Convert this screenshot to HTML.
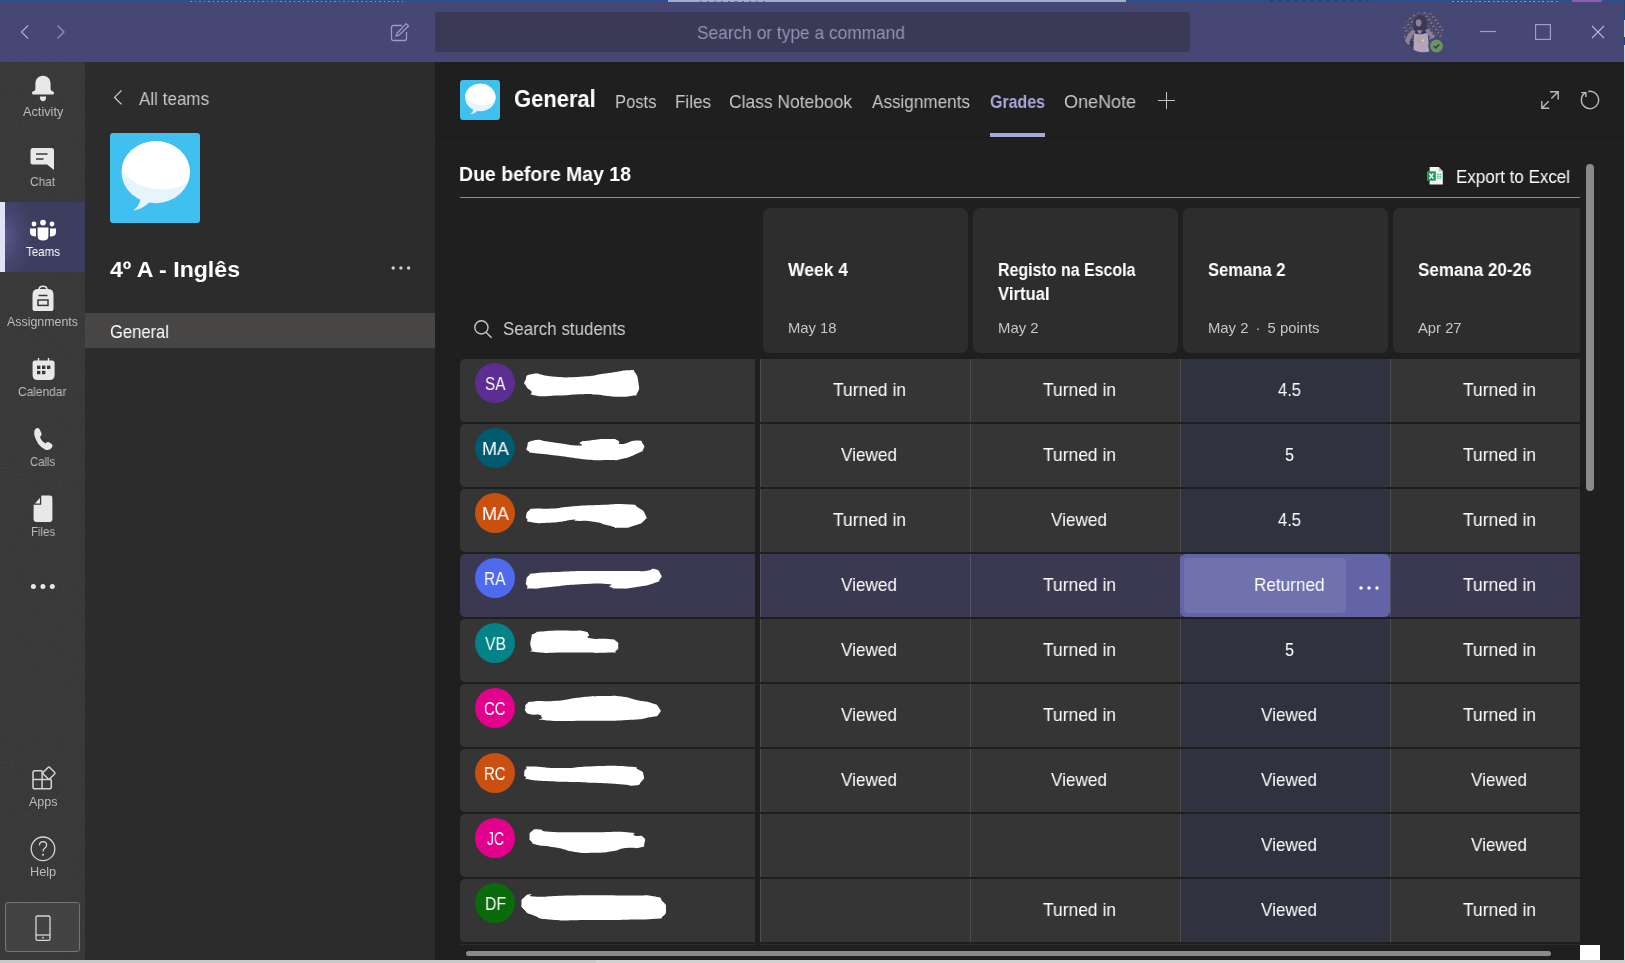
<!DOCTYPE html>
<html lang="en"><head><meta charset="utf-8">
<title>General (4º A - Inglês) | Microsoft Teams</title>
<style>
html,body{margin:0;padding:0;background:#1f1f1f;}
body{width:1625px;height:963px;position:relative;overflow:hidden;
 font-family:"Liberation Sans",sans-serif;}
.t{position:absolute;white-space:nowrap;line-height:1;transform-origin:0 0;display:block;will-change:transform;}
svg{display:block;overflow:visible}
</style></head>
<body>
<div style="position:absolute;left:0px;top:0px;width:1625px;height:62px;background:#464775;"></div>
<div style="position:absolute;left:0px;top:0px;width:1625px;height:2px;background:#26508f;"></div>
<div style="position:absolute;left:190px;top:1px;width:215px;height:1px;background:repeating-linear-gradient(90deg,#7690bb 0 2px,#26508f 2px 5px,#8aa0c6 5px 6px,#26508f 6px 9px);"></div>
<div style="position:absolute;left:668px;top:0px;width:458px;height:2px;background:#9fb0cf;"></div>
<div style="position:absolute;left:700px;top:1px;width:70px;height:1px;background:repeating-linear-gradient(90deg,#5f7398 0 2px,#9fb0cf 2px 7px);"></div>
<div style="position:absolute;left:1270px;top:0px;width:100px;height:2px;background:repeating-linear-gradient(90deg,#1f4580 0 3px,#26508f 3px 8px);"></div>
<div style="position:absolute;left:1452px;top:1px;width:106px;height:1px;background:repeating-linear-gradient(90deg,#8aa0c6 0 2px,#26508f 2px 5px,#6f89b6 5px 7px,#26508f 7px 9px);"></div>
<div style="position:absolute;left:1572px;top:0px;width:30px;height:2px;background:#8e5bb5;"></div>
<svg style="position:absolute;left:0px;top:0px;" width="90" height="62" viewBox="0 0 90 62"><path d="M28 25.5 L21.5 32 L28 38.5" fill="none" stroke="#a9aad0" stroke-width="1.3"/><path d="M57.5 25.5 L64 32 L57.5 38.5" fill="none" stroke="#8f90bd" stroke-width="1.3"/></svg>
<svg style="position:absolute;left:388px;top:20px;" width="24" height="24" viewBox="0 0 24 24"><path d="M14 5.5 H5.2 Q3.5 5.5 3.5 7.2 V18.8 Q3.5 20.5 5.2 20.5 H16.8 Q18.5 20.5 18.5 18.8 V12" fill="none" stroke="#9a9bc3" stroke-width="1.3"/><path d="M18.2 3.6 L20.6 6 L11 15.2 L8 16.2 L9 13.2 Z" fill="none" stroke="#9a9bc3" stroke-width="1.3" stroke-linejoin="round"/></svg>
<div style="position:absolute;left:435px;top:12px;width:755px;height:40px;background:#3b3a56;border-radius:3px;"></div>
<span id="t0" class="t" style="left:697.0px;top:24.02px;font-size:18.40px;font-weight:400;color:#9392b8;transform:scaleX(0.9420)">Search or type a command</span>
<svg style="position:absolute;left:1403px;top:12px;" width="40" height="40" viewBox="0 0 40 40"><defs><clipPath id="avc"><circle cx="20.200" cy="20" r="20.200"/></clipPath><pattern id="avp" width="5" height="4" patternUnits="userSpaceOnUse" patternTransform="rotate(-35)"><rect width="5" height="4" fill="#454263"/><rect x="0.500" y="0.600" width="2.600" height="1.300" fill="#8583a3"/><rect x="3" y="2.600" width="1.600" height="1" fill="#6c6a8c"/></pattern></defs><g clip-path="url(#avc)"><rect width="41" height="41" fill="url(#avp)"/><ellipse cx="17.400" cy="12.500" rx="7.200" ry="9.500" fill="#3d3856"/><path d="M10.600 16 Q9 24 12 27 L15 20Z M23 16 Q25.500 22 23.500 26 L20 20Z" fill="#3d3856"/><ellipse cx="15.600" cy="10.800" rx="2.900" ry="3.600" fill="#8c7d9b"/><path d="M1.500 30 Q3 24 9.500 17 L12.500 19.500 Q7 27 6 33Z" fill="#8c7e9c"/><path d="M22 18.500 L24.500 16.500 Q29 20 32 25.500 L28 27 Q26 22 22 18.500Z" fill="#8c7e9c"/><path d="M11 21 Q17 24 24.500 20.500 L26.500 41 H10.500Z" fill="#b1a5ba"/><path d="M14 18 L16.500 23 L19.500 18.500Z" fill="#97879f"/><ellipse cx="17.500" cy="28.600" rx="3.400" ry="1.800" fill="#c4a077"/><circle cx="19.600" cy="28.400" r="1" fill="#e9e2ea"/><path d="M7 33 Q6 30 8 27 L10.500 30 Q10 36 8 37Z" fill="#3e3a57"/></g><circle cx="33.500" cy="34" r="8.300" fill="#464775"/><circle cx="33.500" cy="34" r="6.400" fill="#6b9560"/><path d="M30.800 34.200 L32.700 35.900 L36.200 32.300" fill="none" stroke="#3c3b58" stroke-width="1.700"/></svg>
<svg style="position:absolute;left:1470px;top:12px;" width="150" height="40" viewBox="0 0 150 40"><path d="M10 19.5 H26" stroke="#9d9ec4" stroke-width="1.2" fill="none"/><rect x="65.6" y="12.6" width="14.8" height="14.8" stroke="#9d9ec4" stroke-width="1.2" fill="none"/><path d="M122 14 L134 26 M134 14 L122 26" stroke="#b4b5d6" stroke-width="1.2" fill="none"/></svg>
<div style="position:absolute;left:0px;top:62px;width:85px;height:898px;background:#383838;"></div>
<svg style="position:absolute;left:0px;top:62px;" width="85" height="898" viewBox="0 0 85 898"><filter id="nz" x="0" y="0" width="100%" height="100%"><feTurbulence type="fractalNoise" baseFrequency="0.55" numOctaves="2" seed="7"/><feColorMatrix type="matrix" values="0 0 0 0 1  0 0 0 0 1  0 0 0 0 1  1.4 0 0 0 -0.55"/></filter><rect width="85" height="898" filter="url(#nz)" opacity="0.05"/></svg>
<div style="position:absolute;left:0px;top:202px;width:85px;height:70px;background:radial-gradient(ellipse 30px 46px at 3px 35px,#595a91 0%,#474872 50%,#3d3e5f 100%);"></div>
<div style="position:absolute;left:0px;top:202px;width:5px;height:70px;background:#e2e2f6;"></div>
<svg style="position:absolute;left:30px;top:74px;" width="26" height="28" viewBox="0 0 26 28"><path d="M13 1.8 C8 1.8 5.4 5.4 5.4 10 V15 Q5.4 17 3.4 17.2 Q2 17.4 2 19 Q2 20.6 3.4 20.6 H22.6 Q24 20.6 24 19 Q24 17.4 22.6 17.2 Q20.6 17 20.6 15 V10 C20.6 5.4 18 1.8 13 1.8Z" fill="#e8e8e8"/><path d="M9.8 22.4 H16.2 Q16 27.2 13 27.2 Q10 27.2 9.8 22.4Z" fill="#e8e8e8"/></svg>
<span id="t1" class="t" style="left:22.5px;top:106.10px;font-size:12.40px;font-weight:400;color:#bdbbb9;transform:scaleX(1.0268)">Activity</span>
<svg style="position:absolute;left:30px;top:147px;" width="26" height="24" viewBox="0 0 26 24"><path d="M2.5 1 H21.5 Q24 1 24 3.5 V23 L17 17.5 H2.5 Q0.5 17.5 0.5 15.5 V3.5 Q0.5 1 2.5 1Z" fill="#e8e8e8"/><path d="M6 7 H17.5 M6 12 H13.5" stroke="#383838" stroke-width="1.6"/></svg>
<span id="t2" class="t" style="left:29.8px;top:176.10px;font-size:12.40px;font-weight:400;color:#bdbbb9;transform:scaleX(0.9623)">Chat</span>
<svg style="position:absolute;left:29px;top:219px;" width="28" height="22" viewBox="0 0 28 22"><circle cx="14" cy="3.6" r="2.9" fill="#fff"/><circle cx="5" cy="5" r="2.4" fill="#fff"/><circle cx="23" cy="5" r="2.4" fill="#fff"/><path d="M8.6 8.6 H19.4 V16.4 Q19.4 21.6 14 21.6 Q8.6 21.6 8.6 16.4Z" fill="#fff"/><path d="M1 9.4 H7 V17.6 Q1 17.4 1 13.4Z" fill="#fff"/><path d="M27 9.4 H21 V17.6 Q27 17.4 27 13.4Z" fill="#fff"/></svg>
<span id="t3" class="t" style="left:26.0px;top:246.10px;font-size:12.40px;font-weight:400;color:#fff;transform:scaleX(0.9315)">Teams</span>
<svg style="position:absolute;left:31px;top:285px;" width="24" height="27" viewBox="0 0 24 27"><path d="M8 4.5 Q8 1.2 12 1.2 Q16 1.2 16 4.5" fill="none" stroke="#e8e8e8" stroke-width="1.5"/><path d="M6.5 4 H17.5 Q22.5 4 22.5 10 V24 Q22.5 26 20.5 26 H3.5 Q1.500 26 1.5 24 V10 Q1.5 4 6.5 4Z" fill="#e8e8e8"/><path d="M7.5 10.5 H16.5" stroke="#383838" stroke-width="1.5"/><rect x="7" y="15" width="10" height="5.4" fill="none" stroke="#383838" stroke-width="1.5"/></svg>
<span id="t4" class="t" style="left:7.0px;top:316.10px;font-size:12.40px;font-weight:400;color:#bdbbb9;transform:scaleX(0.9981)">Assignments</span>
<svg style="position:absolute;left:31px;top:357px;" width="25" height="24" viewBox="0 0 25 24"><path d="M7.500 1 V5 M17.5 1 V5" stroke="#e8e8e8" stroke-width="1.4"/><path d="M4 3.4 H21 Q23.6 3.4 23.6 6 V18 Q23.6 23 18.600 23 H6.4 Q1.6 23 1.6 18 V6 Q1.6 3.4 4 3.4Z" fill="#e8e8e8"/><g fill="#383838"><rect x="6" y="8.6" width="3.4" height="3.4"/><rect x="11" y="8.6" width="3.4" height="3.4"/><rect x="16" y="8.6" width="3.4" height="3.4"/><rect x="6" y="13.8" width="3.4" height="3.4"/><rect x="11" y="13.8" width="3.4" height="3.400"/></g></svg>
<span id="t5" class="t" style="left:18.0px;top:386.10px;font-size:12.40px;font-weight:400;color:#bdbbb9;transform:scaleX(0.9643)">Calendar</span>
<svg style="position:absolute;left:32px;top:426px;" width="22" height="26" viewBox="0 0 22 26"><path d="M3.2 3.2 Q5.6 0.800 7.6 3.2 L9.6 7.6 Q10 9.6 8 11 Q9.6 15.600 13.6 17.400 Q15.2 15.4 17 16.2 L20 18.2 Q21.4 20 19.6 22 Q17 25 13 23.4 Q4.600 19 2.2 8.4 Q1.6 5 3.2 3.2Z" fill="#e8e8e8"/></svg>
<span id="t6" class="t" style="left:29.8px;top:456.10px;font-size:12.40px;font-weight:400;color:#bdbbb9;transform:scaleX(0.9148)">Calls</span>
<svg style="position:absolute;left:32px;top:494px;" width="22" height="29" viewBox="0 0 22 29"><path d="M9.400 1.6 H18 Q20.4 1.6 20.4 4 V25.6 Q20.4 28 18 28 H4 Q1.6 28 1.6 25.6 V10.400Z" fill="#e8e8e8"/><path d="M8.6 2 V10.200 H1.6Z" fill="#e8e8e8" stroke="#383838" stroke-width="1.3"/></svg>
<span id="t7" class="t" style="left:30.8px;top:526.10px;font-size:12.40px;font-weight:400;color:#bdbbb9;transform:scaleX(0.9247)">Files</span>
<svg style="position:absolute;left:28px;top:580px;" width="30" height="14" viewBox="0 0 30 14"><circle cx="5.4" cy="6.6" r="2.5" fill="#e8e8e8"/><circle cx="14.900" cy="6.6" r="2.5" fill="#e8e8e8"/><circle cx="24.3" cy="6.6" r="2.5" fill="#e8e8e8"/></svg>
<svg style="position:absolute;left:30px;top:764px;" width="28" height="28" viewBox="0 0 28 28"><path d="M12.100 6.800 H4.800 Q3 6.800 3 8.600 V23 Q3 24.800 4.800 24.800 H19.500 Q21.300 24.800 21.300 23 V15.600" fill="none" stroke="#d4d4d4" stroke-width="1.500"/><path d="M12.100 6.800 V24.800 M3 15.600 H21.300" stroke="#d4d4d4" stroke-width="1.500" fill="none"/><rect x="14.300" y="4.500" width="9.200" height="9.200" rx="1.200" transform="rotate(-45 18.900 9.100)" fill="#383838" stroke="#d4d4d4" stroke-width="1.500"/></svg>
<span id="t8" class="t" style="left:28.5px;top:796.10px;font-size:12.40px;font-weight:400;color:#bdbbb9;transform:scaleX(1.0088)">Apps</span>
<svg style="position:absolute;left:29px;top:835px;" width="28" height="28" viewBox="0 0 28 28"><circle cx="14" cy="13.800" r="11.800" fill="none" stroke="#d6d6d6" stroke-width="1.3"/><path d="M10.400 10.400 Q10.6 6.6 14.200 6.6 Q17.6 6.800 17.6 10 Q17.6 12 15.6 13.200 Q14 14.200 14 16.400" fill="none" stroke="#d6d6d6" stroke-width="1.300"/><circle cx="14" cy="19.800" r="1" fill="#d6d6d6"/></svg>
<span id="t9" class="t" style="left:29.6px;top:866.10px;font-size:12.40px;font-weight:400;color:#bdbbb9;transform:scaleX(1.0281)">Help</span>
<div style="position:absolute;left:5px;top:902px;width:73px;height:48px;background:#434343;border:1px solid #747474;border-radius:3px;"></div>
<svg style="position:absolute;left:34px;top:914px;" width="18" height="28" viewBox="0 0 18 28"><rect x="2" y="2" width="14" height="24.400" rx="1.6" fill="none" stroke="#d6d6d6" stroke-width="1.3"/><path d="M2 21 H16" stroke="#d6d6d6" stroke-width="1.3"/><circle cx="9" cy="23.700" r="0.9" fill="#d6d6d6"/></svg>
<div style="position:absolute;left:85px;top:62px;width:350px;height:898px;background:#2d2c2c;"></div>
<svg style="position:absolute;left:110px;top:86px;" width="16" height="22" viewBox="0 0 16 22"><path d="M11.500 4.400 L4.6 11.400 L11.5 18.400" fill="none" stroke="#d0d0d0" stroke-width="1.300"/></svg>
<span id="t10" class="t" style="left:139.3px;top:90.02px;font-size:18.40px;font-weight:400;color:#c8c6c4;transform:scaleX(0.9268)">All teams</span>
<svg style="position:absolute;left:110px;top:133px;" width="90" height="90" viewBox="0 0 90 90"><defs><clipPath id="bc90"><ellipse cx="45.700" cy="39.200" rx="34.200" ry="31"/></clipPath></defs><rect width="90" height="90" rx="3" fill="#3fc0ef"/><path d="M30.500 66.500 Q29 73.500 23 77.800 Q33 76 39.500 69Z" fill="#e9f6fd"/><ellipse cx="45.700" cy="39.200" rx="34.200" ry="31" fill="#e6f5fc"/><g clip-path="url(#bc90)"><ellipse cx="49" cy="27" rx="41" ry="29.300" transform="rotate(7 49 27)" fill="#fff"/></g></svg>
<span id="t11" class="t" style="left:110.0px;top:258.81px;font-size:22.20px;font-weight:700;color:#fff;transform:scaleX(1.0414)">4º A - Inglês</span>
<svg style="position:absolute;left:388px;top:262px;" width="26" height="12" viewBox="0 0 26 12"><circle cx="5.200" cy="6" r="1.700" fill="#d0d0d0"/><circle cx="12.900" cy="6" r="1.7" fill="#d0d0d0"/><circle cx="20.600" cy="6" r="1.7" fill="#d0d0d0"/></svg>
<div style="position:absolute;left:85px;top:313px;width:350px;height:35px;background:#474645;"></div>
<span id="t12" class="t" style="left:110.0px;top:322.52px;font-size:18.40px;font-weight:400;color:#fff;transform:scaleX(0.9016)">General</span>
<svg style="position:absolute;left:460px;top:80px;" width="40" height="40" viewBox="0 0 90 90"><defs><clipPath id="bc40"><ellipse cx="45.700" cy="39.200" rx="34.200" ry="31"/></clipPath></defs><rect width="90" height="90" rx="6.75" fill="#3fc0ef"/><path d="M30.500 66.500 Q29 73.500 23 77.800 Q33 76 39.500 69Z" fill="#e9f6fd"/><ellipse cx="45.700" cy="39.200" rx="34.200" ry="31" fill="#e6f5fc"/><g clip-path="url(#bc40)"><ellipse cx="49" cy="27" rx="41" ry="29.300" transform="rotate(7 49 27)" fill="#fff"/></g></svg>
<span id="t13" class="t" style="left:514.2px;top:87.79px;font-size:23.40px;font-weight:700;color:#fff;transform:scaleX(0.9389)">General</span>
<span id="t14" class="t" style="left:615.4px;top:93.19px;font-size:18.20px;font-weight:400;color:#c8c6c4;transform:scaleX(0.9099)">Posts</span>
<span id="t15" class="t" style="left:675.0px;top:93.19px;font-size:18.20px;font-weight:400;color:#c8c6c4;transform:scaleX(0.9373)">Files</span>
<span id="t16" class="t" style="left:729.0px;top:93.19px;font-size:18.20px;font-weight:400;color:#c8c6c4;transform:scaleX(0.9580)">Class Notebook</span>
<span id="t17" class="t" style="left:872.0px;top:93.19px;font-size:18.20px;font-weight:400;color:#c8c6c4;transform:scaleX(0.9412)">Assignments</span>
<span id="t18" class="t" style="left:1064.0px;top:93.19px;font-size:18.20px;font-weight:400;color:#c8c6c4;transform:scaleX(0.9891)">OneNote</span>
<span id="t19" class="t" style="left:990.0px;top:93.19px;font-size:18.20px;font-weight:700;color:#a6a7dc;transform:scaleX(0.8774)">Grades</span>
<div style="position:absolute;left:990px;top:133px;width:55px;height:4px;background:#a6a7dc;"></div>
<div style="position:absolute;left:435px;top:137px;width:1189px;height:1px;background:#191919;"></div>
<div style="position:absolute;left:1158px;top:100px;width:17px;height:1px;background:#c8c6c4;"></div>
<div style="position:absolute;left:1166px;top:92px;width:1px;height:17px;background:#c8c6c4;"></div>
<svg style="position:absolute;left:1540px;top:90px;" width="20" height="20" viewBox="0 0 20 20"><path d="M9.900 1.800 H18.200 V9.500 M18.200 1.800 L11.400 8.600 M1.800 10.900 V18.200 H9.300 M1.800 18.200 L8.700 11.300" fill="none" stroke="#bebcba" stroke-width="1.400"/></svg>
<svg style="position:absolute;left:1579px;top:89px;" width="22" height="22" viewBox="0 0 22 22"><path d="M9.360 2.510 A8.600 8.600 0 1 1 6.830 3.430" fill="none" stroke="#bebcba" stroke-width="1.400"/><path d="M2.300 3.600 H6.900 V8.100" fill="none" stroke="#bebcba" stroke-width="1.400"/></svg>
<span id="t20" class="t" style="left:459.0px;top:165.01px;font-size:19.60px;font-weight:700;color:#fff;transform:scaleX(0.9934)">Due before May 18</span>
<svg style="position:absolute;left:1426px;top:166px;" width="20" height="21" viewBox="0 0 20 21"><path d="M3.600 0.900 H12.700 L16.800 5.300 V18.600 H3.600Z" fill="#f4f4f4"/><path d="M12.700 0.900 V5.300 H16.800Z" fill="#c4c4c4"/><g fill="#4fc388"><rect x="10.900" y="7.800" width="1.900" height="1.200"/><rect x="13.400" y="7.800" width="1.900" height="1.200"/><rect x="10.900" y="9.700" width="1.900" height="1.200"/><rect x="13.400" y="9.700" width="1.900" height="1.200"/><rect x="10.900" y="11.600" width="1.900" height="1.300"/><rect x="13.400" y="11.600" width="1.900" height="1.300"/></g><rect x="0.900" y="5.300" width="8.900" height="9.400" fill="#1f9a59"/><path d="M3.400 7.500 L7.400 12.600 M7.400 7.500 L3.400 12.600" stroke="#fff" stroke-width="1.300"/></svg>
<span id="t21" class="t" style="left:1456.0px;top:167.62px;font-size:18.40px;font-weight:400;color:#fff;transform:scaleX(0.9217)">Export to Excel</span>
<div style="position:absolute;left:460px;top:197px;width:1120px;height:1px;background:#8c8c8c;"></div>
<svg style="position:absolute;left:472px;top:318px;" width="22" height="22" viewBox="0 0 22 22"><circle cx="9.400" cy="9.400" r="6.600" fill="none" stroke="#c8c6c4" stroke-width="1.4"/><path d="M14 14.200 L19.600 19.800" stroke="#c8c6c4" stroke-width="1.500"/></svg>
<span id="t22" class="t" style="left:503.0px;top:320.02px;font-size:18.40px;font-weight:400;color:#d0cecc;transform:scaleX(0.9209)">Search students</span>
<div style="position:absolute;left:760px;top:200px;width:820px;height:160px;overflow:hidden">
<div style="position:absolute;left:3px;top:8px;width:205px;height:145px;background:#2d2d2d;border-radius:7px;"></div>
<div style="position:absolute;left:213px;top:8px;width:205px;height:145px;background:#2d2d2d;border-radius:7px;"></div>
<div style="position:absolute;left:423px;top:8px;width:205px;height:145px;background:#2d2d2d;border-radius:7px;"></div>
<div style="position:absolute;left:633px;top:8px;width:205px;height:145px;background:#2d2d2d;border-radius:7px;"></div>
</div>
<span id="t23" class="t" style="left:787.5px;top:261.36px;font-size:18.00px;font-weight:700;color:#fff;transform:scaleX(0.9722)">Week 4</span>
<span id="t24" class="t" style="left:787.5px;top:321.07px;font-size:14.80px;font-weight:400;color:#c8c6c4;transform:scaleX(0.9994)">May 18</span>
<span id="t25" class="t" style="left:997.5px;top:261.36px;font-size:18.00px;font-weight:700;color:#fff;transform:scaleX(0.8867)">Registo na Escola</span>
<span id="t26" class="t" style="left:997.5px;top:285.36px;font-size:18.00px;font-weight:700;color:#fff;transform:scaleX(0.9248)">Virtual</span>
<span id="t27" class="t" style="left:997.5px;top:321.07px;font-size:14.80px;font-weight:400;color:#c8c6c4;transform:scaleX(1.0050)">May 2</span>
<span id="t28" class="t" style="left:1207.5px;top:261.36px;font-size:18.00px;font-weight:700;color:#fff;transform:scaleX(0.9219)">Semana 2</span>
<span id="t29" class="t" style="left:1207.5px;top:321.07px;font-size:14.80px;font-weight:400;color:#c8c6c4;transform:scaleX(1.0027)">May 2&nbsp;&thinsp;·&thinsp;&nbsp;5 points</span>
<span id="t30" class="t" style="left:1417.5px;top:261.36px;font-size:18.00px;font-weight:700;color:#fff;transform:scaleX(0.9452)">Semana 20-26</span>
<span id="t31" class="t" style="left:1417.5px;top:321.07px;font-size:14.80px;font-weight:400;color:#c8c6c4;transform:scaleX(0.9975)">Apr 27</span>
<div style="position:absolute;left:460px;top:359px;width:295px;height:63px;background:#353535;border-radius:5px 0 0 5px;"></div>
<div style="position:absolute;left:475px;top:363px;width:40px;height:40px;background:#5c2e91;border-radius:50%;"></div>
<span id="t32" class="t" style="left:484.8px;top:375.02px;font-size:18.40px;font-weight:400;color:#fff;transform:scaleX(0.8351)">SA</span>
<div style="position:absolute;left:760px;top:359px;width:820px;height:63px;background:#353535;"></div>
<div style="position:absolute;left:1181px;top:359px;width:209px;height:63px;background:#313240;"></div>
<div style="position:absolute;left:760px;top:359px;width:1px;height:63px;background:#4c4c4c;"></div>
<div style="position:absolute;left:970px;top:359px;width:1px;height:63px;background:#4c4c4c;"></div>
<div style="position:absolute;left:1180px;top:359px;width:1px;height:63px;background:#4c4c4c;"></div>
<div style="position:absolute;left:1390px;top:359px;width:1px;height:63px;background:#4c4c4c;"></div>
<span id="t33" class="t" style="left:832.8px;top:381.02px;font-size:18.40px;font-weight:400;color:#fff;transform:scaleX(0.9479)">Turned in</span>
<span id="t34" class="t" style="left:1042.8px;top:381.02px;font-size:18.40px;font-weight:400;color:#fff;transform:scaleX(0.9479)">Turned in</span>
<span id="t35" class="t" style="left:1277.8px;top:381.02px;font-size:18.40px;font-weight:400;color:#fff;transform:scaleX(0.8992)">4.5</span>
<span id="t36" class="t" style="left:1462.8px;top:381.02px;font-size:18.40px;font-weight:400;color:#fff;transform:scaleX(0.9479)">Turned in</span>
<div style="position:absolute;left:460px;top:424px;width:295px;height:63px;background:#353535;border-radius:5px 0 0 5px;"></div>
<div style="position:absolute;left:475px;top:428px;width:40px;height:40px;background:#005b70;border-radius:50%;"></div>
<span id="t37" class="t" style="left:481.5px;top:440.02px;font-size:18.40px;font-weight:400;color:#fff;transform:scaleX(0.9785)">MA</span>
<div style="position:absolute;left:760px;top:424px;width:820px;height:63px;background:#353535;"></div>
<div style="position:absolute;left:1181px;top:424px;width:209px;height:63px;background:#313240;"></div>
<div style="position:absolute;left:760px;top:424px;width:1px;height:63px;background:#4c4c4c;"></div>
<div style="position:absolute;left:970px;top:424px;width:1px;height:63px;background:#4c4c4c;"></div>
<div style="position:absolute;left:1180px;top:424px;width:1px;height:63px;background:#4c4c4c;"></div>
<div style="position:absolute;left:1390px;top:424px;width:1px;height:63px;background:#4c4c4c;"></div>
<span id="t38" class="t" style="left:841.3px;top:446.02px;font-size:18.40px;font-weight:400;color:#fff;transform:scaleX(0.9333)">Viewed</span>
<span id="t39" class="t" style="left:1042.8px;top:446.02px;font-size:18.40px;font-weight:400;color:#fff;transform:scaleX(0.9479)">Turned in</span>
<span id="t40" class="t" style="left:1284.8px;top:446.02px;font-size:18.40px;font-weight:400;color:#fff;transform:scaleX(0.8794)">5</span>
<span id="t41" class="t" style="left:1462.8px;top:446.02px;font-size:18.40px;font-weight:400;color:#fff;transform:scaleX(0.9479)">Turned in</span>
<div style="position:absolute;left:460px;top:489px;width:295px;height:63px;background:#353535;border-radius:5px 0 0 5px;"></div>
<div style="position:absolute;left:475px;top:493px;width:40px;height:40px;background:#ca5010;border-radius:50%;"></div>
<span id="t42" class="t" style="left:481.5px;top:505.02px;font-size:18.40px;font-weight:400;color:#fff;transform:scaleX(0.9785)">MA</span>
<div style="position:absolute;left:760px;top:489px;width:820px;height:63px;background:#353535;"></div>
<div style="position:absolute;left:1181px;top:489px;width:209px;height:63px;background:#313240;"></div>
<div style="position:absolute;left:760px;top:489px;width:1px;height:63px;background:#4c4c4c;"></div>
<div style="position:absolute;left:970px;top:489px;width:1px;height:63px;background:#4c4c4c;"></div>
<div style="position:absolute;left:1180px;top:489px;width:1px;height:63px;background:#4c4c4c;"></div>
<div style="position:absolute;left:1390px;top:489px;width:1px;height:63px;background:#4c4c4c;"></div>
<span id="t43" class="t" style="left:832.8px;top:511.02px;font-size:18.40px;font-weight:400;color:#fff;transform:scaleX(0.9479)">Turned in</span>
<span id="t44" class="t" style="left:1051.3px;top:511.02px;font-size:18.40px;font-weight:400;color:#fff;transform:scaleX(0.9333)">Viewed</span>
<span id="t45" class="t" style="left:1277.8px;top:511.02px;font-size:18.40px;font-weight:400;color:#fff;transform:scaleX(0.8992)">4.5</span>
<span id="t46" class="t" style="left:1462.8px;top:511.02px;font-size:18.40px;font-weight:400;color:#fff;transform:scaleX(0.9479)">Turned in</span>
<div style="position:absolute;left:460px;top:554px;width:295px;height:63px;background:#3b3952;border-radius:5px 0 0 5px;"></div>
<div style="position:absolute;left:475px;top:558px;width:40px;height:40px;background:#4f6bed;border-radius:50%;"></div>
<span id="t47" class="t" style="left:484.2px;top:570.02px;font-size:18.40px;font-weight:400;color:#fff;transform:scaleX(0.8411)">RA</span>
<div style="position:absolute;left:760px;top:554px;width:820px;height:63px;background:#3b3952;"></div>
<div style="position:absolute;left:760px;top:554px;width:1px;height:63px;background:#55546c;"></div>
<div style="position:absolute;left:970px;top:554px;width:1px;height:63px;background:#55546c;"></div>
<div style="position:absolute;left:1180px;top:554px;width:1px;height:63px;background:#55546c;"></div>
<div style="position:absolute;left:1390px;top:554px;width:1px;height:63px;background:#55546c;"></div>
<span id="t48" class="t" style="left:841.3px;top:576.02px;font-size:18.40px;font-weight:400;color:#fff;transform:scaleX(0.9333)">Viewed</span>
<span id="t49" class="t" style="left:1042.8px;top:576.02px;font-size:18.40px;font-weight:400;color:#fff;transform:scaleX(0.9479)">Turned in</span>
<div style="position:absolute;left:1180px;top:554px;width:210px;height:63px;background:#6264a7;border-radius:6px;"></div>
<div style="position:absolute;left:1184px;top:558px;width:162px;height:55px;background:#7072ad;border-radius:4px;"></div>
<svg style="position:absolute;left:1355px;top:582px;" width="28" height="12" viewBox="0 0 28 12"><circle cx="6" cy="6" r="1.700" fill="#fff"/><circle cx="14" cy="6" r="1.7" fill="#fff"/><circle cx="22" cy="6" r="1.7" fill="#fff"/></svg>
<span id="t50" class="t" style="left:1254.0px;top:576.02px;font-size:18.40px;font-weight:400;color:#fff;transform:scaleX(0.9318)">Returned</span>
<span id="t51" class="t" style="left:1462.8px;top:576.02px;font-size:18.40px;font-weight:400;color:#fff;transform:scaleX(0.9479)">Turned in</span>
<div style="position:absolute;left:460px;top:619px;width:295px;height:63px;background:#353535;border-radius:5px 0 0 5px;"></div>
<div style="position:absolute;left:475px;top:623px;width:40px;height:40px;background:#038387;border-radius:50%;"></div>
<span id="t52" class="t" style="left:484.5px;top:635.02px;font-size:18.40px;font-weight:400;color:#fff;transform:scaleX(0.8555)">VB</span>
<div style="position:absolute;left:760px;top:619px;width:820px;height:63px;background:#353535;"></div>
<div style="position:absolute;left:1181px;top:619px;width:209px;height:63px;background:#313240;"></div>
<div style="position:absolute;left:760px;top:619px;width:1px;height:63px;background:#4c4c4c;"></div>
<div style="position:absolute;left:970px;top:619px;width:1px;height:63px;background:#4c4c4c;"></div>
<div style="position:absolute;left:1180px;top:619px;width:1px;height:63px;background:#4c4c4c;"></div>
<div style="position:absolute;left:1390px;top:619px;width:1px;height:63px;background:#4c4c4c;"></div>
<span id="t53" class="t" style="left:841.3px;top:641.02px;font-size:18.40px;font-weight:400;color:#fff;transform:scaleX(0.9333)">Viewed</span>
<span id="t54" class="t" style="left:1042.8px;top:641.02px;font-size:18.40px;font-weight:400;color:#fff;transform:scaleX(0.9479)">Turned in</span>
<span id="t55" class="t" style="left:1284.8px;top:641.02px;font-size:18.40px;font-weight:400;color:#fff;transform:scaleX(0.8794)">5</span>
<span id="t56" class="t" style="left:1462.8px;top:641.02px;font-size:18.40px;font-weight:400;color:#fff;transform:scaleX(0.9479)">Turned in</span>
<div style="position:absolute;left:460px;top:684px;width:295px;height:63px;background:#353535;border-radius:5px 0 0 5px;"></div>
<div style="position:absolute;left:475px;top:688px;width:40px;height:40px;background:#e3008c;border-radius:50%;"></div>
<span id="t57" class="t" style="left:484.2px;top:700.02px;font-size:18.40px;font-weight:400;color:#fff;transform:scaleX(0.8094)">CC</span>
<div style="position:absolute;left:760px;top:684px;width:820px;height:63px;background:#353535;"></div>
<div style="position:absolute;left:1181px;top:684px;width:209px;height:63px;background:#313240;"></div>
<div style="position:absolute;left:760px;top:684px;width:1px;height:63px;background:#4c4c4c;"></div>
<div style="position:absolute;left:970px;top:684px;width:1px;height:63px;background:#4c4c4c;"></div>
<div style="position:absolute;left:1180px;top:684px;width:1px;height:63px;background:#4c4c4c;"></div>
<div style="position:absolute;left:1390px;top:684px;width:1px;height:63px;background:#4c4c4c;"></div>
<span id="t58" class="t" style="left:841.3px;top:706.02px;font-size:18.40px;font-weight:400;color:#fff;transform:scaleX(0.9333)">Viewed</span>
<span id="t59" class="t" style="left:1042.8px;top:706.02px;font-size:18.40px;font-weight:400;color:#fff;transform:scaleX(0.9479)">Turned in</span>
<span id="t60" class="t" style="left:1261.3px;top:706.02px;font-size:18.40px;font-weight:400;color:#fff;transform:scaleX(0.9333)">Viewed</span>
<span id="t61" class="t" style="left:1462.8px;top:706.02px;font-size:18.40px;font-weight:400;color:#fff;transform:scaleX(0.9479)">Turned in</span>
<div style="position:absolute;left:460px;top:749px;width:295px;height:63px;background:#353535;border-radius:5px 0 0 5px;"></div>
<div style="position:absolute;left:475px;top:753px;width:40px;height:40px;background:#ca5010;border-radius:50%;"></div>
<span id="t62" class="t" style="left:484.2px;top:765.02px;font-size:18.40px;font-weight:400;color:#fff;transform:scaleX(0.8094)">RC</span>
<div style="position:absolute;left:760px;top:749px;width:820px;height:63px;background:#353535;"></div>
<div style="position:absolute;left:1181px;top:749px;width:209px;height:63px;background:#313240;"></div>
<div style="position:absolute;left:760px;top:749px;width:1px;height:63px;background:#4c4c4c;"></div>
<div style="position:absolute;left:970px;top:749px;width:1px;height:63px;background:#4c4c4c;"></div>
<div style="position:absolute;left:1180px;top:749px;width:1px;height:63px;background:#4c4c4c;"></div>
<div style="position:absolute;left:1390px;top:749px;width:1px;height:63px;background:#4c4c4c;"></div>
<span id="t63" class="t" style="left:841.3px;top:771.02px;font-size:18.40px;font-weight:400;color:#fff;transform:scaleX(0.9333)">Viewed</span>
<span id="t64" class="t" style="left:1051.3px;top:771.02px;font-size:18.40px;font-weight:400;color:#fff;transform:scaleX(0.9333)">Viewed</span>
<span id="t65" class="t" style="left:1261.3px;top:771.02px;font-size:18.40px;font-weight:400;color:#fff;transform:scaleX(0.9333)">Viewed</span>
<span id="t66" class="t" style="left:1471.3px;top:771.02px;font-size:18.40px;font-weight:400;color:#fff;transform:scaleX(0.9333)">Viewed</span>
<div style="position:absolute;left:460px;top:814px;width:295px;height:63px;background:#353535;border-radius:5px 0 0 5px;"></div>
<div style="position:absolute;left:475px;top:818px;width:40px;height:40px;background:#e3008c;border-radius:50%;"></div>
<span id="t67" class="t" style="left:486.5px;top:830.02px;font-size:18.40px;font-weight:400;color:#fff;transform:scaleX(0.7561)">JC</span>
<div style="position:absolute;left:760px;top:814px;width:820px;height:63px;background:#353535;"></div>
<div style="position:absolute;left:1181px;top:814px;width:209px;height:63px;background:#313240;"></div>
<div style="position:absolute;left:760px;top:814px;width:1px;height:63px;background:#4c4c4c;"></div>
<div style="position:absolute;left:970px;top:814px;width:1px;height:63px;background:#4c4c4c;"></div>
<div style="position:absolute;left:1180px;top:814px;width:1px;height:63px;background:#4c4c4c;"></div>
<div style="position:absolute;left:1390px;top:814px;width:1px;height:63px;background:#4c4c4c;"></div>
<span id="t68" class="t" style="left:1261.3px;top:836.02px;font-size:18.40px;font-weight:400;color:#fff;transform:scaleX(0.9333)">Viewed</span>
<span id="t69" class="t" style="left:1471.3px;top:836.02px;font-size:18.40px;font-weight:400;color:#fff;transform:scaleX(0.9333)">Viewed</span>
<div style="position:absolute;left:460px;top:879px;width:295px;height:63px;background:#353535;border-radius:5px 0 0 5px;"></div>
<div style="position:absolute;left:475px;top:883px;width:40px;height:40px;background:#0b6a0b;border-radius:50%;"></div>
<span id="t70" class="t" style="left:484.5px;top:895.02px;font-size:18.40px;font-weight:400;color:#fff;transform:scaleX(0.8566)">DF</span>
<div style="position:absolute;left:760px;top:879px;width:820px;height:63px;background:#353535;"></div>
<div style="position:absolute;left:1181px;top:879px;width:209px;height:63px;background:#313240;"></div>
<div style="position:absolute;left:760px;top:879px;width:1px;height:63px;background:#4c4c4c;"></div>
<div style="position:absolute;left:970px;top:879px;width:1px;height:63px;background:#4c4c4c;"></div>
<div style="position:absolute;left:1180px;top:879px;width:1px;height:63px;background:#4c4c4c;"></div>
<div style="position:absolute;left:1390px;top:879px;width:1px;height:63px;background:#4c4c4c;"></div>
<span id="t71" class="t" style="left:1042.8px;top:901.02px;font-size:18.40px;font-weight:400;color:#fff;transform:scaleX(0.9479)">Turned in</span>
<span id="t72" class="t" style="left:1261.3px;top:901.02px;font-size:18.40px;font-weight:400;color:#fff;transform:scaleX(0.9333)">Viewed</span>
<span id="t73" class="t" style="left:1462.8px;top:901.02px;font-size:18.40px;font-weight:400;color:#fff;transform:scaleX(0.9479)">Turned in</span>
<svg style="position:absolute;left:0px;top:0px;" width="1625" height="963" viewBox="0 0 1625 963"><path d="M525.3 380.6 C527.5 376.5 523.7 375.4 532.8 374.0 C541.8 372.6 536.5 375.5 552.4 376.4 C568.3 377.4 561.7 377.9 580.4 376.8 C599.1 375.7 592.3 375.3 608.5 373.1 C624.7 370.9 620.3 370.6 629.0 370.3 C637.7 370.0 631.5 368.1 634.6 372.1 C637.7 376.2 637.4 375.6 638.4 382.4 C639.3 389.3 639.9 388.2 637.4 392.7 C634.9 397.2 639.3 394.6 630.9 395.9 C622.5 397.1 624.0 396.9 612.2 396.4 C600.4 396.0 606.0 395.3 595.4 394.6 C584.8 393.8 592.9 393.9 580.4 394.2 C568.0 394.5 572.9 395.1 558.0 395.5 C543.0 396.0 544.6 397.1 535.6 395.5 C526.5 394.0 534.0 394.0 530.9 390.8 C527.8 387.7 528.1 389.6 526.2 386.2 C524.3 382.7 523.1 384.6 525.3 380.6Z" fill="#fff"/><path d="M527.1 446.9 C528.7 443.2 525.3 441.9 533.7 440.4 C542.1 438.8 537.4 440.5 552.4 442.2 C567.3 444.0 569.2 445.6 578.6 445.6 C587.9 445.6 576.7 444.0 580.4 442.2 C584.2 440.5 580.4 441.4 589.8 440.4 C599.1 439.3 599.1 439.1 608.5 439.1 C617.8 439.1 613.4 438.7 617.8 440.4 C622.2 442.1 615.3 444.1 621.5 444.1 C627.8 444.1 629.3 440.4 636.5 440.4 C643.7 440.4 640.9 441.0 643.0 444.1 C645.2 447.2 644.6 446.8 643.0 449.7 C641.5 452.6 645.5 449.8 638.4 452.9 C631.2 456.0 631.5 456.7 621.5 459.1 C611.6 461.4 620.3 459.9 608.5 460.0 C596.6 460.1 601.6 460.7 586.0 459.4 C570.5 458.2 579.2 458.4 561.7 456.3 C544.3 454.1 544.6 454.6 533.7 453.1 C522.8 451.5 531.2 453.6 529.0 451.6 C526.8 449.5 525.6 450.7 527.1 446.9Z" fill="#fff"/><path d="M526.2 516.1 C526.8 513.3 525.9 513.0 529.0 510.5 C532.1 508.0 527.8 509.2 535.6 508.6 C543.3 508.0 540.5 509.3 552.4 508.6 C564.2 507.9 555.5 507.6 571.1 506.4 C586.7 505.1 580.4 505.5 599.1 504.9 C617.8 504.2 614.1 503.4 627.1 504.3 C640.2 505.2 632.3 504.0 638.4 507.7 C644.5 511.3 643.6 510.8 645.5 515.1 C647.3 519.5 647.6 517.3 644.0 520.7 C640.4 524.2 642.1 523.1 634.6 525.4 C627.1 527.7 630.3 527.7 621.5 527.7 C612.8 527.7 617.8 527.4 608.5 525.4 C599.1 523.4 604.1 523.2 593.5 521.7 C582.9 520.1 583.5 521.4 576.7 520.7 C569.8 520.1 581.0 519.2 572.9 519.8 C564.8 520.4 566.1 521.8 552.4 522.6 C538.7 523.4 540.2 523.5 531.8 522.2 C523.4 521.0 529.0 520.9 527.1 518.9 C525.3 516.8 525.6 518.9 526.2 516.1Z" fill="#fff"/><path d="M526.2 581.2 C526.8 577.7 525.9 578.2 529.0 575.6 C532.1 572.9 524.7 574.6 535.6 573.3 C546.5 572.1 543.7 572.6 561.7 571.8 C579.8 571.1 568.0 571.3 589.8 571.1 C611.6 570.8 608.5 571.1 627.1 571.1 C645.8 571.0 636.8 571.6 645.8 570.9 C654.9 570.2 649.4 568.1 654.3 569.0 C659.1 570.0 658.6 570.3 660.4 573.7 C662.3 577.1 661.9 576.2 659.9 579.3 C657.8 582.4 662.0 580.4 654.3 583.0 C646.5 585.7 648.0 585.3 636.5 587.1 C625.0 589.0 628.4 588.6 619.7 588.6 C611.0 588.6 614.7 588.7 610.3 587.1 C606.0 585.6 617.8 584.8 606.6 584.0 C595.4 583.1 594.8 583.6 576.7 584.5 C558.6 585.5 567.3 585.4 552.4 586.8 C537.4 588.1 540.2 589.0 531.8 588.6 C523.4 588.3 529.0 588.3 527.1 585.8 C525.3 583.3 525.6 584.6 526.2 581.2Z" fill="#fff"/><path d="M531.4 637.2 C532.5 632.3 530.1 635.5 534.6 633.5 C539.1 631.5 532.8 632.2 544.9 631.3 C557.1 630.3 558.0 630.7 571.1 630.7 C584.2 630.7 578.2 630.0 584.2 631.3 C590.1 632.5 586.8 632.1 588.8 634.4 C590.8 636.7 583.6 636.6 590.1 638.2 C596.7 639.7 599.9 638.2 608.5 639.1 C617.1 640.0 612.7 638.8 615.9 641.0 C619.2 643.2 618.2 642.4 618.2 645.7 C618.2 648.9 619.2 648.4 615.9 650.7 C612.7 653.0 623.4 651.9 608.5 652.6 C593.5 653.2 594.8 652.7 571.1 652.6 C547.4 652.4 550.6 653.6 537.4 652.2 C524.2 650.8 533.4 653.4 531.4 648.5 C529.5 643.5 530.4 642.2 531.4 637.2Z" fill="#fff"/><path d="M525.3 708.3 C525.7 705.6 524.3 705.9 527.1 703.6 C530.0 701.3 524.0 702.3 533.7 701.4 C543.3 700.4 540.5 702.1 556.1 700.8 C571.7 699.5 564.2 699.0 580.4 697.4 C596.6 695.9 591.0 696.4 604.7 696.1 C618.4 695.8 611.0 695.2 621.5 696.5 C632.1 697.7 626.5 697.7 636.5 699.9 C646.5 702.0 644.1 700.5 651.4 703.0 C658.8 705.5 656.1 703.7 658.6 707.3 C661.0 711.0 661.9 710.6 658.9 713.9 C655.9 717.2 660.2 715.2 649.6 717.2 C639.0 719.3 647.1 718.9 627.1 720.0 C607.2 721.2 616.6 720.7 589.8 720.8 C563.0 720.9 562.7 721.5 546.8 720.4 C530.9 719.4 544.6 719.5 542.1 717.6 C539.6 715.7 543.3 715.9 539.3 714.8 C535.2 713.7 534.4 715.3 530.0 714.3 C525.5 713.2 527.4 713.6 525.8 711.6 C524.3 709.6 524.8 711.0 525.3 708.3Z" fill="#fff"/><path d="M524.3 773.4 C524.5 770.6 523.7 771.0 526.2 768.7 C528.7 766.4 520.0 766.6 531.8 766.4 C543.7 766.3 542.4 768.1 561.7 768.1 C581.0 768.1 568.0 767.0 589.8 766.4 C611.6 765.9 611.0 765.4 627.1 766.4 C643.3 767.5 632.9 766.7 638.4 769.6 C643.8 772.6 642.7 771.2 643.6 775.2 C644.5 779.3 644.2 778.3 641.2 781.8 C638.2 785.2 641.8 784.7 634.6 785.5 C627.5 786.3 634.6 785.1 619.7 784.2 C604.7 783.3 609.1 783.5 589.8 782.7 C570.5 781.9 581.0 782.7 561.7 781.8 C542.4 780.8 543.8 781.5 531.8 779.9 C519.9 778.3 528.3 779.3 525.8 777.1 C523.3 774.9 524.2 776.2 524.3 773.4Z" fill="#fff"/><path d="M529.6 836.9 C529.7 833.5 528.6 833.8 531.8 831.3 C535.1 828.8 532.4 829.3 539.3 829.4 C546.2 829.6 535.6 830.9 552.4 831.9 C569.2 832.8 564.8 832.1 589.8 832.2 C614.7 832.4 612.2 831.1 627.1 832.2 C642.1 833.4 629.3 834.0 634.6 835.6 C639.9 837.2 639.8 834.3 643.0 836.9 C646.3 839.5 645.3 839.9 644.3 843.5 C643.4 847.0 646.6 846.0 640.2 847.6 C633.9 849.1 634.6 846.9 625.3 848.1 C615.9 849.4 622.8 849.8 612.2 851.3 C601.6 852.9 606.0 852.6 593.5 852.8 C581.0 853.0 587.3 853.6 574.8 851.9 C562.4 850.1 568.6 849.9 556.1 847.6 C543.7 845.3 545.7 846.9 537.4 845.0 C529.2 843.0 534.1 844.3 531.4 841.6 C528.8 838.9 529.5 840.3 529.6 836.9Z" fill="#fff"/><path d="M521.5 903.3 C521.5 899.1 521.2 900.3 524.3 897.3 C527.5 894.3 526.8 894.5 530.9 894.3 C534.9 894.1 523.1 896.4 536.5 896.7 C549.9 897.1 540.9 895.9 571.1 895.4 C601.3 895.0 599.7 895.2 627.1 895.4 C654.6 895.7 641.5 894.2 653.3 896.2 C665.2 898.2 658.4 897.2 662.7 901.4 C666.9 905.6 666.0 903.9 666.0 908.9 C666.0 913.9 666.3 913.1 662.7 916.4 C659.0 919.7 667.0 917.7 655.2 918.8 C643.3 919.9 649.0 919.3 627.1 919.7 C605.3 920.2 614.7 920.1 589.8 920.1 C564.8 920.1 571.1 921.3 552.4 919.7 C533.7 918.2 543.0 918.7 533.7 915.4 C524.3 912.1 528.4 913.9 524.3 909.8 C520.3 905.8 521.5 907.4 521.5 903.3Z" fill="#fff"/></svg>
<div style="position:absolute;left:460px;top:944px;width:295px;height:1px;background:#2c2c2c;"></div>
<div style="position:absolute;left:760px;top:944px;width:820px;height:1px;background:#2c2c2c;"></div>
<div style="position:absolute;left:466px;top:951px;width:1085px;height:5px;background:#8a8a8a;border-radius:3px;"></div>
<div style="position:absolute;left:1580px;top:945px;width:20px;height:15px;background:#fff;"></div>
<div style="position:absolute;left:1586px;top:164px;width:8px;height:327px;background:#8a8a8a;border-radius:4px;"></div>
<div style="position:absolute;left:0px;top:960px;width:1625px;height:3px;background:#d2d2d2;"></div>
<div style="position:absolute;left:0px;top:960px;width:596px;height:3px;background:#c9c9c9;"></div>
<div style="position:absolute;left:1624px;top:0px;width:1px;height:960px;background:#d8d8d8;"></div>
<div style="position:absolute;left:1624px;top:0px;width:1px;height:20px;background:#2b4a7a;"></div>
<div style="position:absolute;left:1624px;top:37px;width:1px;height:8px;background:#2b4a7a;"></div>
</body></html>
